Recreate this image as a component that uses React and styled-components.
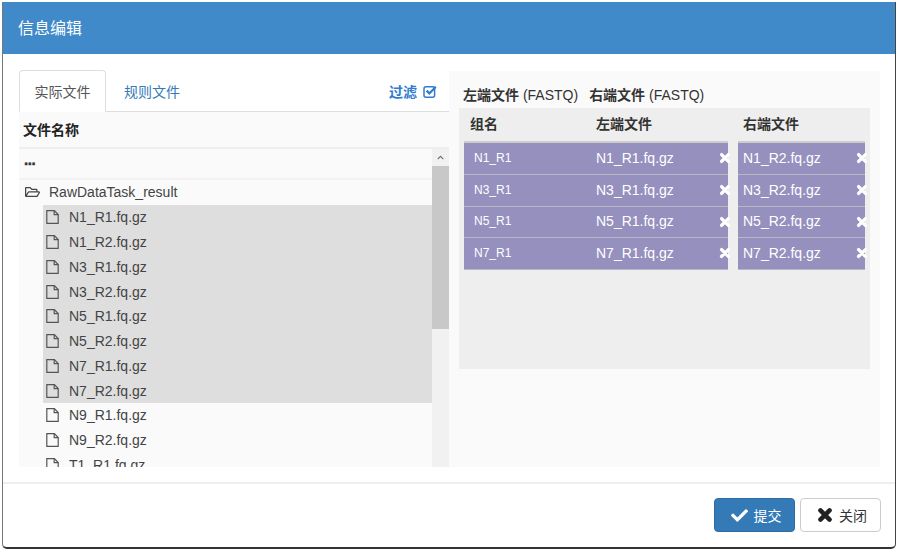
import React from 'react';
import styled, { createGlobalStyle } from 'styled-components';
import { FaCheck, FaRegFolderOpen, FaChevronUp, FaChevronDown } from 'react-icons/fa';

const fonts = `"Liberation Sans", "Noto Sans CJK SC", Arial, sans-serif`;

const files = ['N1_R1', 'N1_R2', 'N3_R1', 'N3_R2', 'N5_R1', 'N5_R2', 'N7_R1', 'N7_R2', 'N9_R1', 'N9_R2', 'T1_R1'];
const selected = 8;
const pairs = ['N1', 'N3', 'N5', 'N7'];

const GlobalStyle = createGlobalStyle`
html, body {
  margin: 0;
  background: #fff;
  font-family: ${fonts};
}
* { box-sizing: border-box; }
`;

const Modal = styled.div`
width: 894px;
height: 547px;
margin: 2px 0 0 2px;
display: flex;
flex-direction: column;
background: #fff;
border-left: 1px solid #777;
border-right: 1px solid #444;
border-bottom: 2px solid #333;
border-radius: 0 0 5px 5px;
overflow: hidden;
`;

const Header = styled.div`
height: 52px;
flex: none;
display: flex;
align-items: center;
padding: 0 0 2px 15px;
background: #408aca;
color: #fff;
font-size: 16px;
`;

const Body = styled.div`
height: 428px;
flex: none;
display: flex;
padding: 17px 15px 15px 16px;
`;

const LeftPane = styled.div`
width: 430px;
flex: none;
display: flex;
flex-direction: column;
min-height: 0;
`;

const TabBar = styled.div`
height: 41px;
flex: none;
display: flex;
align-items: flex-end;
border-bottom: 1px solid #ddd;
`;

const Tab = styled.div`
height: ${p => (p.$active ? '42px' : '41px')};
margin-bottom: ${p => (p.$active ? '-1px' : '0')};
width: ${p => (p.$active ? '87px' : '92px')};
display: flex;
align-items: center;
justify-content: center;
font-size: 14px;
color: ${p => (p.$active ? '#555' : '#337ab7')};
background: ${p => (p.$active ? '#fff' : 'transparent')};
border: 1px solid ${p => (p.$active ? '#ddd' : 'transparent')};
border-bottom-color: ${p => (p.$active ? '#fff' : 'transparent')};
border-radius: 4px 4px 0 0;
`;

const Filter = styled.div`
margin-left: auto;
align-self: center;
margin-right: 12px;
display: flex;
align-items: center;
gap: 6px;
color: #2f7bd0;
font-size: 14px;
font-weight: 700;
`;

const TreeHead = styled.div`
height: 37px;
flex: none;
display: flex;
align-items: center;
padding: 0 0 2px 4px;
background: #fafafa;
border-bottom: 2px solid #eee;
color: #222;
font-size: 14px;
font-weight: 700;
`;

const TreeWrap = styled.div`
flex: 1;
min-height: 0;
display: flex;
background: #fafafa;
overflow: hidden;
`;

const TreeList = styled.div`
flex: 1;
min-width: 0;
overflow: hidden;
`;

const UpRow = styled.div`
height: 31px;
display: flex;
align-items: center;
padding: 0 0 9px 5px;
border-bottom: 2px solid #f2f2f2;
color: #333;
font-size: 15px;
font-weight: 700;
letter-spacing: -0.4px;
-webkit-text-stroke: 0.4px #333;
`;

const FolderRow = styled.div`
height: 25px;
display: flex;
align-items: center;
padding: 0 0 1px 6px;
color: #444;
font-size: 14px;

svg {
  width: 15px;
  height: 14px;
  margin-right: 9px;
}
`;

const FileRow = styled.div`
height: 24.75px;
margin-left: 24px;
display: flex;
align-items: center;
padding-left: 3px;
color: #444;
font-size: 14px;
background: ${p => (p.$selected ? '#dedede' : 'transparent')};
`;

const FileGlyph = styled.svg`
width: 13px;
height: 14px;
flex: none;
margin-right: 10px;
fill: none;
stroke: #555;
stroke-width: 1.2;
`;

const FilterGlyph = styled.svg`
width: 14px;
height: 13px;
flex: none;
fill: none;
stroke: #2f7bd0;
`;

const CrossGlyph = styled.svg`
width: ${p => p.$size}px;
height: ${p => p.$size}px;
flex: none;
stroke: currentColor;
stroke-width: 3.4;
stroke-linecap: round;
`;

const ScrollTrack = styled.div`
width: 17px;
flex: none;
display: flex;
flex-direction: column;
background: #f1f1f1;
overflow: hidden;
`;

const ScrollArrow = styled.div`
height: 17px;
flex: none;
display: flex;
align-items: center;
justify-content: center;
color: #666;

svg {
  width: 7px;
  height: 7px;
}
`;

const ScrollThumb = styled.div`
height: 163px;
flex: none;
background: #c8c8c8;
`;

const ScrollGap = styled.div`
height: 132px;
flex: none;
`;

const RightPane = styled.div`
width: 431px;
flex: none;
padding: 0 10px;
background: #fafafa;
`;

const Titles = styled.div`
height: 37px;
display: flex;
align-items: flex-end;
padding: 0 0 4px 4px;
gap: 11px;
color: #333;
font-size: 14px;
`;

const TitleName = styled.b`
font-weight: 700;
`;

const Board = styled.div`
height: 261px;
display: flex;
padding: 0 5px;
gap: 10px;
background: #eee;
`;

const LeftTable = styled.div`
width: 264px;
flex: none;
`;

const RightTable = styled.div`
width: 127px;
flex: none;
`;

const HeadRow = styled.div`
height: 35px;
display: flex;
align-items: center;
padding-bottom: 4px;
border-bottom: 2px solid #ccc;
color: #333;
font-size: 14px;
font-weight: 700;
`;

const DataRow = styled.div`
height: 31.75px;
display: flex;
align-items: center;
position: relative;
padding-bottom: 1px;
background: #9590bd;
border-bottom: 1px solid #b8b6c4;
color: #fff;
font-size: 14px;
`;

const GroupCell = styled.div`
width: 132px;
flex: none;
padding-left: ${p => (p.$head ? '6px' : '10px')};
font-size: ${p => (p.$head ? '14px' : '12px')};
`;

const FileCell = styled.div`
padding-left: ${p => (p.$narrow ? '5px' : '0')};
`;

const RemoveSlot = styled.span`
position: absolute;
right: -3px;
top: 9px;
display: flex;
color: #fff;
`;

const Footer = styled.div`
flex: 1;
display: flex;
justify-content: flex-end;
align-items: flex-start;
gap: 5px;
padding: 14px 14px 0 0;
border-top: 2px solid #eee;
`;

const Button = styled.button`
height: 34px;
width: 81px;
display: flex;
align-items: center;
justify-content: center;
gap: 6px;
font-family: ${fonts};
font-size: 14px;
padding: 0 0 0 3px;
color: ${p => (p.$primary ? '#fff' : '#333')};
background: ${p => (p.$primary ? '#337ab7' : '#fff')};
border: 1px solid ${p => (p.$primary ? '#2e6da4' : '#ccc')};
border-radius: 4px;
`;

const PrimaryCheck = styled(FaCheck)`
width: 17px;
height: 17px;
`;

const CloseMark = styled.span`
display: flex;
color: #222;
`;

const FileIcon = () => (
  <FileGlyph viewBox="0 0 13 14">
    <path d="M.8 .7H8.4L12.2 4.5V13.3H.8Z" />
    <path d="M8.2 .7V4.7H12.2" />
  </FileGlyph>
);

const FilterIcon = () => (
  <FilterGlyph viewBox="0 0 14 13">
    <rect x="1" y="1.8" width="10.6" height="10.4" rx="2" strokeWidth="1.5" />
    <path d="M3.6 5.6L6.4 8.4L12.8 1.8" strokeWidth="2.2" />
  </FilterGlyph>
);

const CrossIcon = ({ size }) => (
  <CrossGlyph $size={size} viewBox="0 0 12 12">
    <path d="M2.6 2.6L9.4 9.4M9.4 2.6L2.6 9.4" />
  </CrossGlyph>
);

const App = () => (
  <Modal>
    <GlobalStyle />
    <Header>信息编辑</Header>
    <Body>
      <LeftPane>
        <TabBar>
          <Tab $active>实际文件</Tab>
          <Tab>规则文件</Tab>
          <Filter>过滤 <FilterIcon /></Filter>
        </TabBar>
        <TreeHead>文件名称</TreeHead>
        <TreeWrap>
          <TreeList>
            <UpRow>...</UpRow>
            <FolderRow><FaRegFolderOpen />RawDataTask_result</FolderRow>
            {files.map((name, index) => (
              <FileRow key={name} $selected={index < selected}>
                <FileIcon />{name}.fq.gz
              </FileRow>
            ))}
          </TreeList>
          <ScrollTrack>
            <ScrollArrow><FaChevronUp /></ScrollArrow>
            <ScrollThumb />
            <ScrollGap />
            <ScrollArrow><FaChevronDown /></ScrollArrow>
          </ScrollTrack>
        </TreeWrap>
      </LeftPane>
      <RightPane>
        <Titles>
          <span><TitleName>左端文件</TitleName> (FASTQ)</span>
          <span><TitleName>右端文件</TitleName> (FASTQ)</span>
        </Titles>
        <Board>
          <LeftTable>
            <HeadRow>
              <GroupCell $head>组名</GroupCell>
              <FileCell>左端文件</FileCell>
            </HeadRow>
            {pairs.map(id => (
              <DataRow key={id}>
                <GroupCell>{id}_R1</GroupCell>
                <FileCell>{id}_R1.fq.gz</FileCell>
                <RemoveSlot><CrossIcon size={12} /></RemoveSlot>
              </DataRow>
            ))}
          </LeftTable>
          <RightTable>
            <HeadRow>
              <FileCell $narrow>右端文件</FileCell>
            </HeadRow>
            {pairs.map(id => (
              <DataRow key={id}>
                <FileCell $narrow>{id}_R2.fq.gz</FileCell>
                <RemoveSlot><CrossIcon size={12} /></RemoveSlot>
              </DataRow>
            ))}
          </RightTable>
        </Board>
      </RightPane>
    </Body>
    <Footer>
      <Button $primary><PrimaryCheck />提交</Button>
      <Button><CloseMark><CrossIcon size={16} /></CloseMark>关闭</Button>
    </Footer>
  </Modal>
);

export default App;
